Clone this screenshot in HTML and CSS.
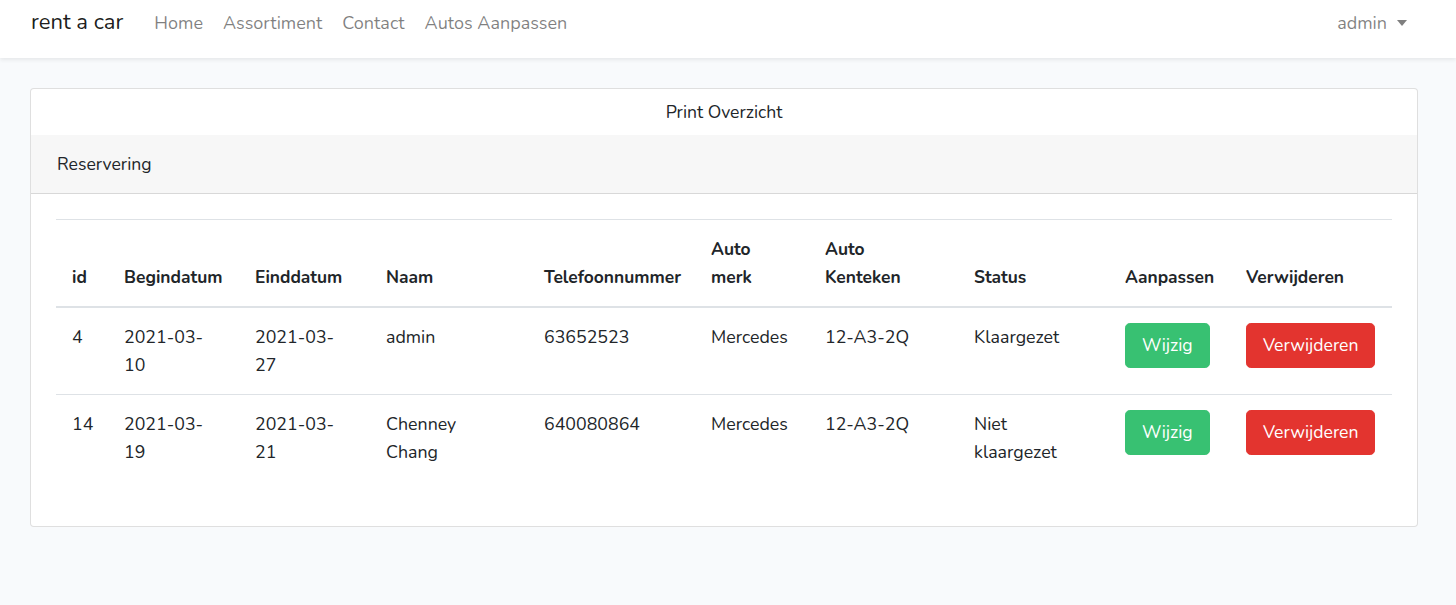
FILE: index.html
```html
<!DOCTYPE html>
<html lang="nl">
<head>
<meta charset="utf-8">
<title>rent a car</title>
<link rel="stylesheet" href="styles.css">
</head>
<body>
<nav class="navbar">
  <div class="nav-left">
    <a class="brand" href="#">rent a car</a>
    <ul class="nav-links">
      <li><a href="#">Home</a></li>
      <li><a href="#">Assortiment</a></li>
      <li><a href="#">Contact</a></li>
      <li><a href="#">Autos Aanpassen</a></li>
    </ul>
  </div>
  <a class="user-toggle" href="#">admin <span class="caret"></span></a>
</nav>
<main class="main">
  <div class="card">
    <div class="card-top">Print Overzicht</div>
    <div class="card-header">Reservering</div>
    <div class="card-body">
      <table class="table">
        <colgroup>
          <col class="c-id"><col class="c-date"><col class="c-date"><col class="c-name"><col class="c-tel"><col class="c-merk"><col class="c-kent"><col class="c-status"><col class="c-edit"><col class="c-del">
        </colgroup>
        <thead>
          <tr>
            <th>id</th><th>Begindatum</th><th>Einddatum</th><th>Naam</th><th>Telefoonnummer</th><th>Auto<br>merk</th><th>Auto<br>Kenteken</th><th>Status</th><th>Aanpassen</th><th>Verwijderen</th>
          </tr>
        </thead>
        <tbody>
          <tr>
            <td>4</td><td>2021-03-<br>10</td><td>2021-03-<br>27</td><td>admin</td><td>63652523</td><td>Mercedes</td><td>12-A3-2Q</td><td>Klaargezet</td>
            <td><a class="btn btn-green" href="#">Wijzig</a></td>
            <td><a class="btn btn-red" href="#">Verwijderen</a></td>
          </tr>
          <tr>
            <td>14</td><td>2021-03-<br>19</td><td>2021-03-<br>21</td><td>Chenney<br>Chang</td><td>640080864</td><td>Mercedes</td><td>12-A3-2Q</td><td>Niet<br>klaargezet</td>
            <td><a class="btn btn-green" href="#">Wijzig</a></td>
            <td><a class="btn btn-red" href="#">Verwijderen</a></td>
          </tr>
        </tbody>
      </table>
    </div>
  </div>
</main>
</body>
</html>
```
FILE: styles.css
```css
* { box-sizing: border-box; }
html, body { margin: 0; padding: 0; }
body {
  background: #f8fafc;
  font-family: "Nunito", Lato, "Noto Sans", sans-serif;
  font-size: 17.6px;
  line-height: 1.6;
  color: #212529;
}
a { text-decoration: none; }

.navbar {
  height: 58px;
  background: #fff;
  box-shadow: 0 2px 4px rgba(0,0,0,.075);
  display: flex;
  align-items: flex-start;
  justify-content: space-between;
  padding: 9px 49px 0 31px;
  position: relative;
}
.nav-left { display: flex; align-items: center; height: 28px; }
.brand {
  font-size: 22px;
  color: rgba(0,0,0,.9);
  margin-right: 31px;
  line-height: 1;
  padding-bottom: 2px;
}
.nav-links {
  list-style: none;
  margin: 0;
  padding: 0;
  display: flex;
  gap: 20px;
}
.nav-links a, .user-toggle {
  color: rgba(0,0,0,.5);
  display: block;
  font-size: 18px;
  line-height: 28px;
}
.user-toggle { display: flex; align-items: center; }
.caret {
  display: inline-block;
  width: 0; height: 0;
  margin-left: 10px;
  border-top: 6px solid rgba(0,0,0,.5);
  border-left: 5px solid transparent;
  border-right: 5px solid transparent;
}

.main { padding: 30px 38px 30px 30px; }

.card {
  background: #fff;
  border: 1px solid rgba(0,0,0,.125);
  border-radius: 4px;
}
.card-top {
  height: 46px;
  display: flex;
  align-items: center;
  justify-content: center;
}
.card-header {
  background: #f7f7f7;
  border-bottom: 1px solid rgba(0,0,0,.125);
  padding: 15px 26px;
  line-height: 28px;
  height: 59px;
}
.card-body { padding: 25px 25px 25px; }

.table {
  width: 100%;
  border-collapse: collapse;
  table-layout: fixed;
  margin-bottom: 20px;
}
.c-id { width: 52px; }
.c-date { width: 131px; }
.c-name { width: 158px; }
.c-tel { width: 167px; }
.c-merk { width: 114px; }
.c-kent { width: 149px; }
.c-status { width: 151px; }
.c-edit { width: 121px; }
.c-del { width: 162px; }

.table th, .table td {
  padding: 15px 16px;
  line-height: 28px;
  text-align: left;
  border-top: 1px solid #dee2e6;
}
.table th {
  font-weight: 700;
  font-size: 17.4px;
  vertical-align: bottom;
  border-bottom: 2px solid #dee2e6;
  white-space: nowrap;
}
.table td { vertical-align: top; white-space: nowrap; font-size: 17.8px; }

.btn {
  display: inline-block;
  color: #fff;
  font-size: 17.6px;
  line-height: 27px;
  padding: 8px 16px;
  border: 1px solid transparent;
  border-radius: 4.8px;
  height: 45px;
}
.btn-green { background: #38c172; border-color: #38c172; }
.btn-red { background: #e3342f; border-color: #e3342f; }
```
